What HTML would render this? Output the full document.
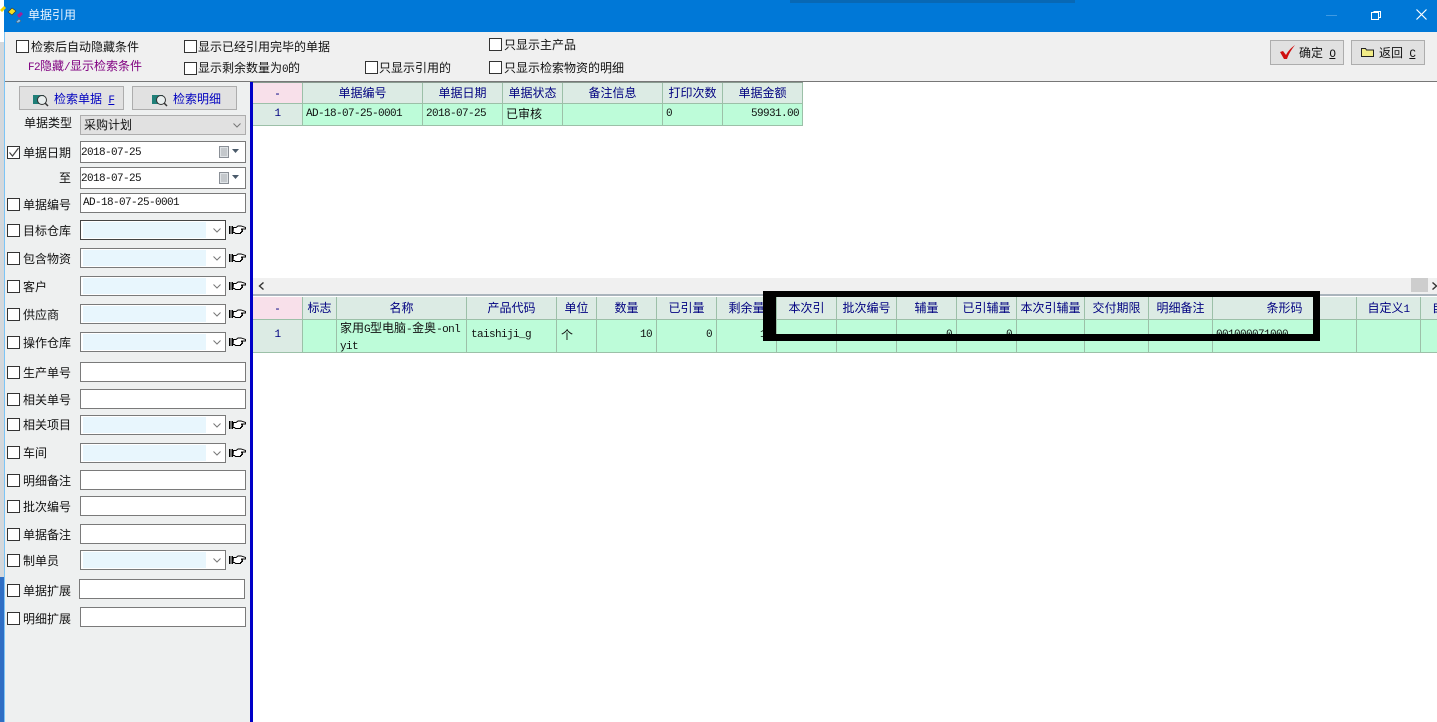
<!DOCTYPE html>
<html><head><meta charset="utf-8"><style>
html,body{margin:0;padding:0;background:#fff}
#p{position:relative;width:1437px;height:722px;overflow:hidden;background:#fff;font:12px/14px "Liberation Sans","WenQuanYi Zen Hei","Noto Sans CJK SC",sans-serif;color:#111}
#p div,#p span.a,#p svg{position:absolute}
.cb{width:11px;height:11px;border:1px solid #333;background:#fff}
.t{white-space:nowrap;height:14px}
.in{background:#fff;border:1px solid #7a7a7a;box-sizing:border-box;width:166px;left:80px;height:20px;font:11px/19px "Liberation Mono",monospace;letter-spacing:-.6px;padding-left:2px}
.cm{background:#fff;border:1px solid #7a7a7a;box-sizing:border-box;left:80px;width:146px;height:20px}
.cm i{position:absolute;left:2px;top:1px;width:123px;height:16px;background:#e8f6fd}
.btn{background:#e1e1e1;border:1px solid #adadad;box-sizing:border-box}
.m{font-family:"Liberation Mono",monospace;font-size:11px;letter-spacing:-.6px}
.u{text-decoration:underline;margin-left:3px}
.c{box-sizing:border-box;border-right:1px solid #9cc0a8;border-bottom:1px solid #9cc0a8;text-align:center;white-space:nowrap;overflow:hidden}
.h{background:#dcebe4;color:#000080}
.r{background:#bdfcd9}
.mm{font-family:"Liberation Mono",monospace;font-size:11px;letter-spacing:-.6px}
</style></head><body><div id="p">
<svg width="0" height="0" style="left:0;top:0"><defs>
<g id="hand"><path d="M0 1h1.500v8H0zM2.500 1H4v8H2.500z" fill="#000"/><path d="M4.500 2.500h2.500l2-1.500h3l4.500 1.500v1.500h-4v1h1v1.500h-1v1h-1v1h-5l-1-1h-1.500z" fill="#fff" stroke="#000" stroke-width=".9"/></g>
<path id="chev" d="M.5.500l3.500 3.500 3.500-3.500" fill="none" stroke="#777"/>
<g id="mag"><rect x="0" y="2" width="11" height="9" fill="#1f7f78"/><circle cx="9" cy="7" r="4.500" fill="#e8eeee" stroke="#333"/><path d="M12 10l3 3" stroke="#333" stroke-width="1.500"/></g>
<g id="cal"><rect x="0.500" y="0.500" width="9" height="11" fill="#dfe3e6" stroke="#8a8f96"/><path d="M2 3h6M2 5h6M2 7h6M2 9h6" stroke="#a9aeb3"/><path d="M13 3h7l-3.500 4z" fill="#4a5a6a"/></g>
</defs></svg>

<!-- frame -->
<div style="left:0;top:0;width:1437px;height:32px;background:#0078d7"></div>
<div style="left:0;top:0;width:5px;height:722px;background:#2f6ec4"></div>
<div style="left:0;top:0;width:4px;height:42px;background:#fff"></div>
<div style="left:0;top:42px;width:4px;height:535px;background:#d4d8dc"></div>
<div style="left:4px;top:0;width:1px;height:32px;background:#0078d7"></div>
<div style="left:4px;top:32px;width:1px;height:690px;background:#7cc4f5"></div>
<div style="left:790px;top:0;width:285px;height:3px;background:#0868b4"></div>
<div style="left:5px;top:32px;width:1432px;height:49px;background:#f0f0f0"></div>
<div style="left:5px;top:81px;width:1432px;height:1px;background:#777"></div>
<div style="left:5px;top:82px;width:245px;height:640px;background:#eef0f0"></div>
<div style="left:250px;top:82px;width:3px;height:640px;background:#0000c8"></div>

<!-- title -->
<svg style="left:0;top:3px" width="24" height="20"><path d="M0 7l4-4 2 2-4 4z" fill="#f4d400"/><path d="M8 9l4-4 4 3-4 4z" fill="#f4e020" stroke="#333" stroke-width=".6"/><path d="M17 12l4-3 2 2-4 4z" fill="#a0209a"/><path d="M16 19l3-3 2 2-3 2z" fill="#7fb8e8" stroke="#555" stroke-width=".5"/></svg>
<div class="t" style="left:28px;top:8px;color:#e8f4ff">单据引用</div>
<div style="left:1326px;top:15px;width:11px;height:1px;background:#3f9ae2"></div>
<svg style="left:1371px;top:10px" width="11" height="11"><path d="M2.500 2.500h7v6h-2M.5 3.500h7v7h-7z" fill="none" stroke="#fff" transform="translate(0 -1)"/></svg>
<svg style="left:1416px;top:9px" width="11" height="11"><path d="M.5.500l10 10M10.500.500l-10 10" stroke="#fff" stroke-width="1.200"/></svg>

<!-- toolbar -->
<div class="cb" style="left:16px;top:40px"></div><div class="t" style="left:31px;top:40px">检索后自动隐藏条件</div>
<div class="t" style="left:28px;top:59px;color:#800080"><span class="m">F2</span>隐藏<span class="m">/</span>显示检索条件</div>
<div class="cb" style="left:184px;top:40px"></div><div class="t" style="left:198px;top:40px">显示已经引用完毕的单据</div>
<div class="cb" style="left:184px;top:62px"></div><div class="t" style="left:198px;top:61px">显示剩余数量为<span class="m">0</span>的</div>
<div class="cb" style="left:365px;top:61px"></div><div class="t" style="left:379px;top:61px">只显示引用的</div>
<div class="cb" style="left:489px;top:38px"></div><div class="t" style="left:504px;top:38px">只显示主产品</div>
<div class="cb" style="left:489px;top:61px"></div><div class="t" style="left:504px;top:61px">只显示检索物资的明细</div>

<div class="btn" style="left:1270px;top:40px;width:74px;height:25px"></div>
<svg style="left:1279px;top:44px" width="17" height="17"><path d="M1 8l3-1 3 4C9 7 12 4 16 1c-3 4-6 8-8 14H5z" fill="#d01010"/></svg>
<div class="t" style="left:1299px;top:46px">确定 <span class="m u">O</span></div>
<div class="btn" style="left:1351px;top:40px;width:74px;height:25px"></div>
<svg style="left:1361px;top:47px" width="14" height="11"><path d="M.5 9.500v-8h4l1 1.500h7v6.500z" fill="#f2ec86" stroke="#222"/></svg>
<div class="t" style="left:1379px;top:46px">返回 <span class="m u">C</span></div>

<!-- left buttons -->
<div class="btn" style="left:19px;top:86px;width:105px;height:24px"></div>
<svg style="left:33px;top:93px" width="16" height="15"><use href="#mag"/></svg>
<div class="t" style="left:54px;top:92px;color:#0000c0">检索单据 <span class="m u">F</span></div>
<div class="btn" style="left:132px;top:86px;width:105px;height:24px"></div>
<svg style="left:152px;top:93px" width="16" height="15"><use href="#mag"/></svg>
<div class="t" style="left:173px;top:92px;color:#0000c0">检索明细</div>

<div class="t" style="left:24px;top:116px">单据类型</div>
<div class="btn" style="left:80px;top:115px;width:166px;height:20px"></div>
<div class="t" style="left:84px;top:118px">采购计划</div>
<svg style="left:233px;top:123px" width="8" height="5"><use href="#chev"/></svg>

<!-- date rows -->
<div class="cb" style="left:7px;top:146px"></div>
<svg style="left:8px;top:147px" width="12" height="12"><path d="M1.500 5.500l3 3.500 6-8" fill="none" stroke="#444" stroke-width="1.200"/></svg>
<div class="t" style="left:23px;top:146px">单据日期</div>
<div class="in" style="top:141px;height:22px;line-height:22px;padding-left:0">2018-07-25</div>
<svg style="left:219px;top:146px" width="21" height="13"><use href="#cal"/></svg>
<div class="t" style="left:59px;top:171px">至</div>
<div class="in" style="top:167px;height:22px;line-height:22px;padding-left:0">2018-07-25</div>
<svg style="left:219px;top:172px" width="21" height="13"><use href="#cal"/></svg>

<!-- rows -->
<div class="cb" style="left:7px;top:198px"></div><div class="t" style="left:23px;top:198px">单据编号</div>
<div class="in" style="top:193px">AD-18-07-25-0001</div>

<div class="cb" style="left:7px;top:224px"></div><div class="t" style="left:23px;top:224px">目标仓库</div>
<div class="cm" style="top:220px;border-color:#444"><i></i></div><svg style="left:213px;top:228px" width="8" height="5"><use href="#chev"/></svg><svg style="left:229px;top:225px" width="17" height="11"><use href="#hand"/></svg>

<div class="cb" style="left:7px;top:252px"></div><div class="t" style="left:23px;top:252px">包含物资</div>
<div class="cm" style="top:248px"><i></i></div><svg style="left:213px;top:256px" width="8" height="5"><use href="#chev"/></svg><svg style="left:229px;top:253px" width="17" height="11"><use href="#hand"/></svg>

<div class="cb" style="left:7px;top:280px"></div><div class="t" style="left:23px;top:280px">客户</div>
<div class="cm" style="top:276px"><i></i></div><svg style="left:213px;top:284px" width="8" height="5"><use href="#chev"/></svg><svg style="left:229px;top:281px" width="17" height="11"><use href="#hand"/></svg>

<div class="cb" style="left:7px;top:308px"></div><div class="t" style="left:23px;top:308px">供应商</div>
<div class="cm" style="top:304px"><i></i></div><svg style="left:213px;top:312px" width="8" height="5"><use href="#chev"/></svg><svg style="left:229px;top:309px" width="17" height="11"><use href="#hand"/></svg>

<div class="cb" style="left:7px;top:336px"></div><div class="t" style="left:23px;top:336px">操作仓库</div>
<div class="cm" style="top:332px"><i></i></div><svg style="left:213px;top:340px" width="8" height="5"><use href="#chev"/></svg><svg style="left:229px;top:337px" width="17" height="11"><use href="#hand"/></svg>

<div class="cb" style="left:7px;top:366px"></div><div class="t" style="left:23px;top:366px">生产单号</div>
<div class="in" style="top:362px"></div>

<div class="cb" style="left:7px;top:393px"></div><div class="t" style="left:23px;top:393px">相关单号</div>
<div class="in" style="top:389px"></div>

<div class="cb" style="left:7px;top:418px"></div><div class="t" style="left:23px;top:418px">相关项目</div>
<div class="cm" style="top:415px"><i></i></div><svg style="left:213px;top:423px" width="8" height="5"><use href="#chev"/></svg><svg style="left:229px;top:420px" width="17" height="11"><use href="#hand"/></svg>

<div class="cb" style="left:7px;top:446px"></div><div class="t" style="left:23px;top:446px">车间</div>
<div class="cm" style="top:443px"><i></i></div><svg style="left:213px;top:451px" width="8" height="5"><use href="#chev"/></svg><svg style="left:229px;top:448px" width="17" height="11"><use href="#hand"/></svg>

<div class="cb" style="left:7px;top:474px"></div><div class="t" style="left:23px;top:474px">明细备注</div>
<div class="in" style="top:470px"></div>

<div class="cb" style="left:7px;top:500px"></div><div class="t" style="left:23px;top:500px">批次编号</div>
<div class="in" style="top:496px"></div>

<div class="cb" style="left:7px;top:528px"></div><div class="t" style="left:23px;top:528px">单据备注</div>
<div class="in" style="top:524px"></div>

<div class="cb" style="left:7px;top:554px"></div><div class="t" style="left:23px;top:554px">制单员</div>
<div class="cm" style="top:550px"><i></i></div><svg style="left:213px;top:558px" width="8" height="5"><use href="#chev"/></svg><svg style="left:229px;top:555px" width="17" height="11"><use href="#hand"/></svg>

<div class="cb" style="left:7px;top:584px"></div><div class="t" style="left:23px;top:584px">单据扩展</div>
<div class="in" style="top:579px;left:79px"></div>

<div class="cb" style="left:7px;top:612px"></div><div class="t" style="left:23px;top:612px">明细扩展</div>
<div class="in" style="top:607px"></div>

<!-- upper grid -->
<div style="left:253px;top:82px;width:550px;height:1px;background:#8a9a90"></div>
<div class="c" style="left:253px;top:83px;width:50px;height:21px;background:#f8e0ea;color:#000080;line-height:20px">-</div>
<div class="c h" style="left:303px;top:83px;width:120px;height:21px;line-height:20px">单据编号</div>
<div class="c h" style="left:423px;top:83px;width:80px;height:21px;line-height:20px">单据日期</div>
<div class="c h" style="left:503px;top:83px;width:60px;height:21px;line-height:20px">单据状态</div>
<div class="c h" style="left:563px;top:83px;width:100px;height:21px;line-height:20px">备注信息</div>
<div class="c h" style="left:663px;top:83px;width:60px;height:21px;line-height:20px">打印次数</div>
<div class="c h" style="left:723px;top:83px;width:80px;height:21px;line-height:20px">单据金额</div>
<div class="c h mm" style="left:253px;top:104px;width:50px;height:22px;line-height:21px">1</div>
<div class="c r mm" style="left:303px;top:104px;width:120px;height:22px;line-height:21px;text-align:left;padding-left:3px">AD-18-07-25-0001</div>
<div class="c r mm" style="left:423px;top:104px;width:80px;height:22px;line-height:21px;text-align:left;padding-left:3px">2018-07-25</div>
<div class="c r" style="left:503px;top:104px;width:60px;height:22px;line-height:21px;text-align:left;padding-left:3px">已审核</div>
<div class="c r" style="left:563px;top:104px;width:100px;height:22px"></div>
<div class="c r mm" style="left:663px;top:104px;width:60px;height:22px;line-height:21px;text-align:left;padding-left:3px">0</div>
<div class="c r mm" style="left:723px;top:104px;width:80px;height:22px;line-height:21px;text-align:right;padding-right:3px">59931.00</div>

<!-- scrollbar -->
<div style="left:253px;top:278px;width:1184px;height:16px;background:#f0f0f0"></div>
<svg style="left:258px;top:282px" width="7" height="8"><path d="M5.500.500L1.500 4l4 3.500" fill="none" stroke="#333" stroke-width="1.400"/></svg>
<div style="left:1411px;top:278px;width:17px;height:14px;background:#cdcdcd"></div>
<svg style="left:1432px;top:282px" width="5" height="8"><path d="M.5.500L4.500 4l-4 3.500" fill="none" stroke="#333" stroke-width="1.400"/></svg>
<div style="left:253px;top:294px;width:1184px;height:2px;background:#aab4bc"></div>

<!-- lower grid header -->
<div class="c" style="left:253px;top:297px;width:50px;height:23px;background:#f8e0ea;color:#000080;line-height:22px">-</div>
<div class="c h" style="left:303px;top:297px;width:34px;height:23px;line-height:22px">标志</div>
<div class="c h" style="left:337px;top:297px;width:130px;height:23px;line-height:22px">名称</div>
<div class="c h" style="left:467px;top:297px;width:90px;height:23px;line-height:22px">产品代码</div>
<div class="c h" style="left:557px;top:297px;width:40px;height:23px;line-height:22px">单位</div>
<div class="c h" style="left:597px;top:297px;width:60px;height:23px;line-height:22px">数量</div>
<div class="c h" style="left:657px;top:297px;width:60px;height:23px;line-height:22px">已引量</div>
<div class="c h" style="left:717px;top:297px;width:60px;height:23px;line-height:22px">剩余量</div>
<div class="c h" style="left:777px;top:297px;width:60px;height:23px;line-height:22px">本次引</div>
<div class="c h" style="left:837px;top:297px;width:60px;height:23px;line-height:22px">批次编号</div>
<div class="c h" style="left:897px;top:297px;width:60px;height:23px;line-height:22px">辅量</div>
<div class="c h" style="left:957px;top:297px;width:60px;height:23px;line-height:22px">已引辅量</div>
<div class="c h" style="left:1017px;top:297px;width:68px;height:23px;line-height:22px">本次引辅量</div>
<div class="c h" style="left:1085px;top:297px;width:64px;height:23px;line-height:22px">交付期限</div>
<div class="c h" style="left:1149px;top:297px;width:64px;height:23px;line-height:22px">明细备注</div>
<div class="c h" style="left:1213px;top:297px;width:144px;height:23px;line-height:22px">条形码</div>
<div class="c h" style="left:1357px;top:297px;width:64px;height:23px;line-height:22px">自定义<span class="m">1</span></div>
<div class="c h" style="left:1421px;top:297px;width:64px;height:23px;line-height:22px;text-align:left;padding-left:11px">自定义<span class="m">2</span></div>

<!-- lower grid row -->
<div class="c h mm" style="left:253px;top:320px;width:50px;height:33px;line-height:31px">1</div>
<div class="c r" style="left:303px;top:320px;width:34px;height:33px"></div>
<div class="c r" style="left:337px;top:320px;width:130px;height:33px;text-align:left;padding:1px 0 0 3px;line-height:15px;white-space:normal">家用<span class="mm">G</span>型电脑<span class="mm">-</span>金奥<span class="mm">-onl</span><br><span class="mm">yit</span></div>
<div class="c r mm" style="left:467px;top:320px;width:90px;height:33px;line-height:31px;text-align:left;padding-left:4px">taishiji_g</div>
<div class="c r" style="left:557px;top:320px;width:40px;height:33px;line-height:31px;text-align:left;padding-left:4px">个</div>
<div class="c r mm" style="left:597px;top:320px;width:60px;height:33px;line-height:31px;text-align:right;padding-right:4px">10</div>
<div class="c r mm" style="left:657px;top:320px;width:60px;height:33px;line-height:31px;text-align:right;padding-right:4px">0</div>
<div class="c r mm" style="left:717px;top:320px;width:60px;height:33px;line-height:31px;text-align:right;padding-right:4px">10</div>
<div class="c r" style="left:777px;top:320px;width:60px;height:33px"></div>
<div class="c r" style="left:837px;top:320px;width:60px;height:33px"></div>
<div class="c r mm" style="left:897px;top:320px;width:60px;height:33px;line-height:31px;text-align:right;padding-right:4px">0</div>
<div class="c r mm" style="left:957px;top:320px;width:60px;height:33px;line-height:31px;text-align:right;padding-right:4px">0</div>
<div class="c r" style="left:1017px;top:320px;width:68px;height:33px"></div>
<div class="c r" style="left:1085px;top:320px;width:64px;height:33px"></div>
<div class="c r" style="left:1149px;top:320px;width:64px;height:33px"></div>
<div class="c r mm" style="left:1213px;top:320px;width:144px;height:33px;line-height:31px;text-align:left;padding-left:3px">001000071000</div>
<div class="c r" style="left:1357px;top:320px;width:64px;height:33px"></div>
<div class="c r" style="left:1421px;top:320px;width:64px;height:33px"></div>

<!-- black annotation -->
<div style="left:763px;top:291px;width:557px;height:50px;box-sizing:border-box;border-style:solid;border-color:#000;border-width:6px 7px 7px 13px"></div>
</div></body></html>
